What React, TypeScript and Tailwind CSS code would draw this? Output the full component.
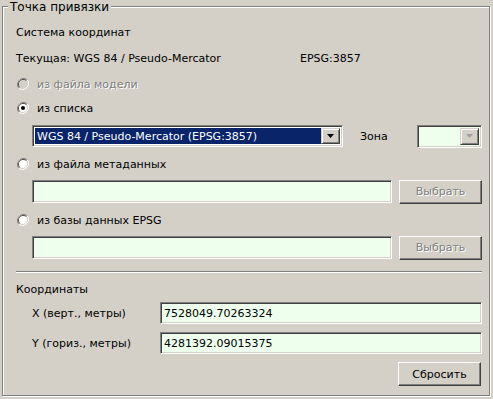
import React from "react";

const FONT = "font-['DejaVu_Sans',sans-serif] text-[11px] leading-none";

function Radio({ checked, disabled, label }: { checked?: boolean; disabled?: boolean; label: string }) {
  return (
    <div className="flex h-[20px] items-center pl-[1px]">
      <svg width="12" height="12" viewBox="0 0 12 12" className="shrink-0">
        <path d="M10.2 1.8 A6 6 0 0 0 1.8 10.2" fill="none" stroke="#808080" strokeWidth="1" />
        <path d="M1.8 10.2 A6 6 0 0 0 10.2 1.8" fill="none" stroke="#ffffff" strokeWidth="1" />
        <path d="M9.5 2.5 A5 5 0 0 0 2.5 9.5" fill="none" stroke="#404040" strokeWidth="1" />
        <path d="M2.5 9.5 A5 5 0 0 0 9.5 2.5" fill="none" stroke="#d4d0c8" strokeWidth="1" />
        <circle cx="6" cy="6" r="4" fill={disabled ? "#d4d0c8" : "#ffffff"} />
        {checked && <circle cx="6" cy="6" r="2" fill="#000000" />}
      </svg>
      <span
        className={
          disabled
            ? "ml-[8px] text-[#808080] [text-shadow:1px_1px_0_#ffffff]"
            : "ml-[8px] text-black"
        }
      >
        {label}
      </span>
    </div>
  );
}

function Sunken({ className, children }: { className: string; children?: React.ReactNode }) {
  return (
    <div
      className={
        "border border-t-[#808080] border-l-[#808080] border-b-white border-r-white shadow-[inset_1px_1px_0_#404040,inset_-1px_-1px_0_#d4d0c8] " +
        className
      }
    >
      {children}
    </div>
  );
}

function DropButton({ disabled }: { disabled?: boolean }) {
  return (
    <div className="flex h-full w-[19px] shrink-0 items-center justify-center border border-t-[#d4d0c8] border-l-[#d4d0c8] border-b-[#404040] border-r-[#404040] bg-[#d4d0c8] shadow-[inset_1px_1px_0_#ffffff,inset_-1px_-1px_0_#808080]">
      <svg width="7" height="4" viewBox="0 0 7 4">
        <path d="M0 0 H7 L3.5 4 Z" fill={disabled ? "#a0a0a0" : "#000000"} />
      </svg>
    </div>
  );
}

function Button({ label, disabled }: { label: string; disabled?: boolean }) {
  return (
    <div className="flex h-[24px] w-[83px] items-center justify-center border border-t-white border-l-white border-b-[#404040] border-r-[#404040] bg-[#d4d0c8] shadow-[inset_-1px_-1px_0_#808080]">
      <span className={disabled ? "text-[#808080] [text-shadow:1px_1px_0_#ffffff]" : "text-black"}>{label}</span>
    </div>
  );
}

export default function App() {
  return (
    <div className={"h-[399px] w-[493px] overflow-hidden bg-[#d4d0c8] pl-[2px] pt-[6px] text-black " + FONT}>
      <div className="relative h-[390px] w-[488px] border border-[#808080] shadow-[inset_1px_1px_0_#ffffff,1px_1px_0_#ffffff]">
        <div className="absolute -top-[7px] left-[5px] bg-[#d4d0c8] px-[2px] text-[12px] leading-[14px]">Точка привязки</div>

        <div className="flex flex-col pl-[13px] pt-[15px]">
          <div className="flex h-[20px] items-center">Система координат</div>
          <div className="mt-[6px] flex h-[20px] items-center">
            <span className="w-[284px]">Текущая: WGS 84 / Pseudo-Mercator</span>
            <span>EPSG:3857</span>
          </div>
          <div className="mt-[6px]">
            <Radio disabled label="из файла модели" />
          </div>
          <div className="mt-[4px]">
            <Radio checked label="из списка" />
          </div>

          <div className="mt-[7px] flex h-[22px] items-center pl-[16px]">
            <Sunken className="flex h-[22px] w-[311px] items-stretch bg-white p-[2px]">
              <div className="flex flex-1 items-center bg-[#0a246a] pl-[2px] text-white">
                WGS 84 / Pseudo-Mercator (EPSG:3857)
              </div>
              <DropButton />
            </Sunken>
            <span className="ml-[17px] w-[57px]">Зона</span>
            <Sunken className="flex h-[23px] w-[65px] items-stretch bg-[#eeffee] p-[2px]">
              <div className="flex-1" />
              <DropButton disabled />
            </Sunken>
          </div>

          <div className="mt-[7px]">
            <Radio label="из файла метаданных" />
          </div>
          <div className="mt-[6px] flex h-[23px] items-center pl-[16px]">
            <Sunken className="h-[23px] w-[360px] bg-[#eeffee]" />
            <div className="ml-[7px]">
              <Button disabled label="Выбрать" />
            </div>
          </div>

          <div className="mt-[7px]">
            <Radio label="из базы данных EPSG" />
          </div>
          <div className="mt-[6px] flex h-[23px] items-center pl-[16px]">
            <Sunken className="h-[23px] w-[360px] bg-[#eeffee]" />
            <div className="ml-[7px]">
              <Button disabled label="Выбрать" />
            </div>
          </div>

          <div className="mt-[12px] h-[2px] w-[466px] border-t border-t-[#808080] border-b border-b-white" />

          <div className="mt-[6px] flex h-[20px] items-center">Координаты</div>
          <div className="mt-[3px] flex h-[22px] items-center">
            <span className="w-[144px] pl-[16px]">X (верт., метры)</span>
            <Sunken className="flex h-[22px] w-[322px] items-center bg-[#eeffee] pl-[3px]">7528049.70263324</Sunken>
          </div>
          <div className="mt-[8px] flex h-[22px] items-center">
            <span className="w-[144px] pl-[16px]">Y (гориз., метры)</span>
            <Sunken className="flex h-[22px] w-[322px] items-center bg-[#eeffee] pl-[3px]">4281392.09015375</Sunken>
          </div>
          <div className="mt-[8px] flex justify-end pr-[8px]">
            <Button label="Сбросить" />
          </div>
        </div>
      </div>
    </div>
  );
}
